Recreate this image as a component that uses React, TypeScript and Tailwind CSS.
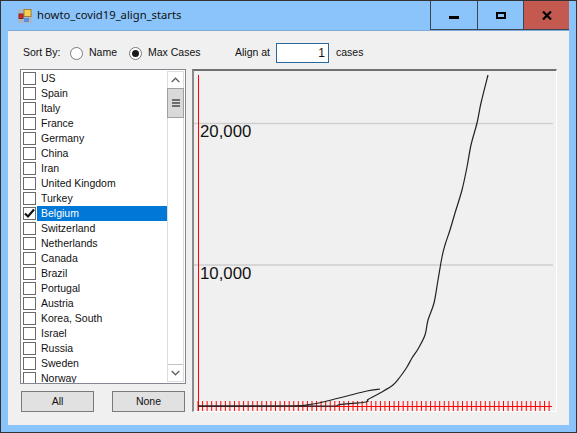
const items = ["US","Spain","Italy","France","Germany","China","Iran","United Kingdom","Turkey","Belgium","Switzerland","Netherlands","Canada","Brazil","Portugal","Austria","Korea, South","Israel","Russia","Sweden","Norway"];
const ticks = Array.from({ length: 78 }, (_, i) => 198 + i * 4.56);

function smooth(p: number[][]) {
  let d = `M${p[0][0]} ${p[0][1]}`;
  for (let i = 0; i < p.length - 1; i++) {
    const a = p[Math.max(0, i - 1)];
    const b = p[i];
    const c = p[i + 1];
    const e = p[Math.min(p.length - 1, i + 2)];
    const k = 1 / 6;
    d += ` C${b[0] + (c[0] - a[0]) * k} ${b[1] + (c[1] - a[1]) * k} ${c[0] - (e[0] - b[0]) * k} ${c[1] - (e[1] - b[1]) * k} ${c[0]} ${c[1]}`;
  }
  return d;
}

const curve = smooth([[198,406],[290,406],[333,406],[340,404.6],[366,402],[368,399.5],[380,393],[393,385],[400,377],[407,367],[412,358],[418,349],[425,335],[428,320],[434,303],[438,280],[442,257],[445,245],[450,230],[455,213],[462,190],[467,167],[471,145],[477,123],[481,103],[488,75]]);
const curve2 = smooth([[198,406],[290,406],[313,404],[327,401],[347,396],[367,391],[380,389]]);

function Radio({ on, label, w }: { on?: boolean; label: string; w: string }) {
  return (
    <div className="flex items-center gap-[6px]">
      <div className="w-[13px] h-[13px] rounded-full border border-[#7a7a7a] bg-white flex items-center justify-center">
        {on && <div className="w-[7px] h-[7px] rounded-full bg-[#1a1a1a]" />}
      </div>
      <span className={w}>{label}</span>
    </div>
  );
}

function Row({ label, selected }: { label: string; selected?: boolean }) {
  return (
    <div className="flex items-center h-[15px] shrink-0">
      <div className="ml-[2px] w-[13px] h-[13px] border border-[#6a6a6a] bg-white flex items-center justify-center">
        {selected && (
          <svg width="11" height="11" viewBox="0 0 11 11">
            <path d="M1 5.5 L4 8.5 L10 1.5" fill="none" stroke="#111" strokeWidth="2.2" />
          </svg>
        )}
      </div>
      <div className={`ml-px flex-1 h-full pl-[4px] leading-[15px] ${selected ? "bg-[#0078d7] text-white" : ""}`}>{label}</div>
    </div>
  );
}

export default function App() {
  return (
    <div className="w-[577px] h-[433px] bg-[#8bc4fa] border border-[#333] flex flex-col overflow-hidden font-['Liberation_Sans',sans-serif] text-[10.5px] text-[#111]">
      <div className="h-[29px] flex items-stretch shrink-0">
        <div className="flex-1 flex items-center pl-[17px]">
          <svg width="14" height="14" viewBox="0 0 14 14">
            <rect width="14" height="14" fill="#a9b6c6" />
            <rect x="6" y="0.5" width="7" height="7" fill="#f5cf55" stroke="#a08030" />
            <rect x="1" y="5" width="4" height="4.5" fill="#d8262a" stroke="#7a2a2a" />
            <rect x="6" y="9" width="5" height="4" fill="#5a8ee0" />
          </svg>
          <span className="ml-[5px] font-['Noto_Sans',sans-serif] text-[11.25px] text-[#111]">howto_covid19_align_starts</span>
        </div>
        <div className="w-[47px] border-l border-b border-[#3a4654] flex items-center justify-center">
          <div className="w-[10px] h-[3px] bg-black mt-[4px]" />
        </div>
        <div className="w-[46px] border-l border-b border-[#3a4654] flex items-center justify-center">
          <div className="w-[10px] h-[7px] border-2 border-black" />
        </div>
        <div className="w-[46px] border-l border-b border-[#3a4654] bg-[#c45a4f] flex items-center justify-center">
          <svg width="10" height="9" viewBox="0 0 10 9">
            <path d="M1 0.5 L9 8.5 M9 0.5 L1 8.5" stroke="#000" strokeWidth="2.2" fill="none" />
          </svg>
        </div>
        <div className="w-[7px] border-b border-[#8bc4fa]" />
      </div>
      <div className="mx-[7px] mb-[7px] flex-1 bg-[#f0f0f0] border-t border-[#7fa9d6] flex flex-col pl-[12px] pt-[12px]">
        <div className="h-[20px] flex items-center">
          <span className="ml-[3px] w-[47px]">Sort By:</span>
          <Radio label="Name" w="w-[40px]" />
          <Radio on label="Max Cases" w="w-[87px]" />
          <span className="w-[41px]">Align at</span>
          <div className="w-[53px] h-[20px] border border-[#2a689c] bg-white text-right pr-[3px] leading-[18px] text-[12px]">1</div>
          <span className="ml-[7px]">cases</span>
        </div>
        <div className="flex mt-[6px]">
          <div className="w-[166px] flex flex-col">
            <div className="h-[315px] border border-[#828790] bg-white flex overflow-hidden">
              <div className="flex-1 flex flex-col overflow-hidden pt-px">
                {items.map((n) => (
                  <Row key={n} label={n} selected={n === "Belgium"} />
                ))}
              </div>
              <div className="w-[17px] my-px mr-px flex flex-col border border-[#dcdcdc] bg-white">
                <div className="h-[16px] flex items-center justify-center">
                  <svg width="9" height="6" viewBox="0 0 9 6"><path d="M0.7 5 L4.5 1.2 L8.3 5" fill="none" stroke="#606060" strokeWidth="1.3" /></svg>
                </div>
                <div className="h-[30px] -mx-px bg-[#d9d9d9] border border-[#a0a0a0] flex flex-col items-center justify-center gap-px">
                  <div className="w-[8px] h-[2px] bg-[#6e6e6e]" />
                  <div className="w-[8px] h-[2px] bg-[#6e6e6e]" />
                  <div className="w-[8px] h-[2px] bg-[#6e6e6e]" />
                </div>
                <div className="flex-1" />
                <div className="h-[17px] border-t border-[#c4c4c4] flex items-center justify-center">
                  <svg width="9" height="6" viewBox="0 0 9 6"><path d="M0.7 1 L4.5 4.8 L8.3 1" fill="none" stroke="#606060" strokeWidth="1.3" /></svg>
                </div>
              </div>
            </div>
            <div className="flex justify-between mt-[7px] pl-px pr-px">
              <div className="w-[73px] h-[21px] bg-[#e1e1e1] border border-[#7a7a7a] flex items-center justify-center">All</div>
              <div className="w-[73px] h-[21px] bg-[#e1e1e1] border border-[#7a7a7a] flex items-center justify-center">None</div>
            </div>
          </div>
          <div className="ml-[6px] w-[365px] h-[343px] border-t-2 border-l-2 border-t-[#707070] border-l-[#8a8a8a] border-r border-b border-r-white border-b-white overflow-hidden">
            <svg width="362" height="340" viewBox="194 71 362 340" className="block">
              <line x1="194" x2="553" y1="123.5" y2="123.5" stroke="#cfcfcf" strokeWidth="1.5" />
              <line x1="194" x2="553" y1="265" y2="265" stroke="#cfcfcf" strokeWidth="1.5" />
              <text x="200" y="136.5" fontFamily="Liberation Sans" fontSize="16.8" fill="#111">20,000</text>
              <text x="200" y="278.5" fontFamily="Liberation Sans" fontSize="16.8" fill="#111">10,000</text>
              <line x1="198.5" x2="198.5" y1="75" y2="411" stroke="#ff0000" />
              <line x1="198" x2="552" y1="406.5" y2="406.5" stroke="#ff0000" />
              {ticks.map((x) => (
                <line key={x} x1={x} x2={x} y1="401" y2="411" stroke="#ff0000" />
              ))}
              <path d={curve2} fill="none" stroke="#222" strokeWidth="1.2" />
              <path d={curve} fill="none" stroke="#222" strokeWidth="1.2" />
            </svg>
          </div>
        </div>
      </div>
    </div>
  );
}
